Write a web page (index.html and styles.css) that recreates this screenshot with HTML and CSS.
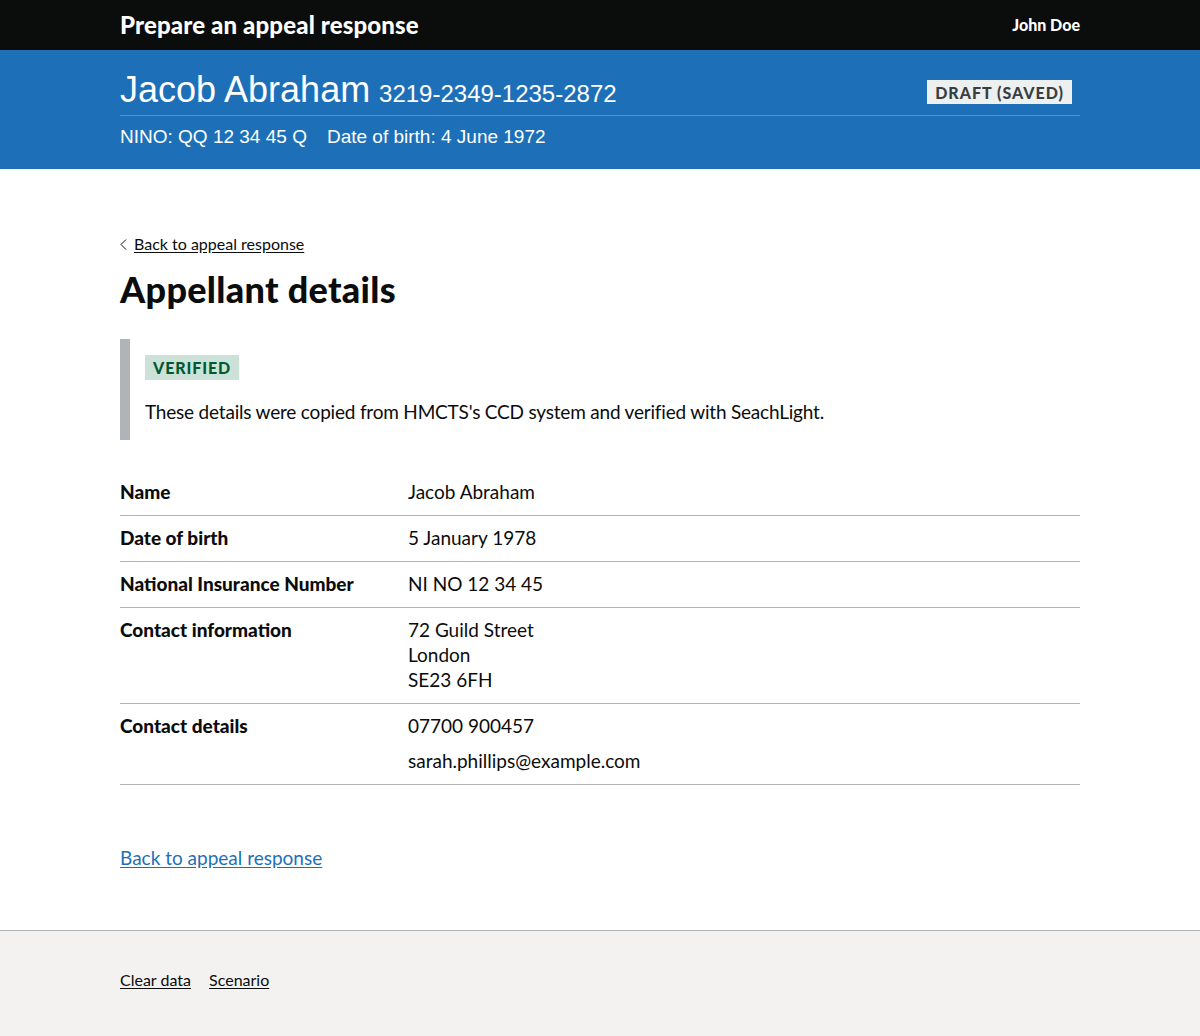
FILE: index.html
```html
<!DOCTYPE html>
<html lang="en">
<head>
<meta charset="utf-8">
<title>Appellant details</title>
<link rel="stylesheet" href="styles.css">
</head>
<body>
<header class="topbar">
  <div class="width">
    <div class="topbar-inner">
      <span class="service">Prepare an appeal response</span>
      <span class="user">John Doe</span>
    </div>
  </div>
</header>
<section class="banner">
  <div class="width">
    <div class="banner-top">
      <h1 class="person"><span class="person-name">Jacob Abraham</span> <span class="person-ref">3219-2349-1235-2872</span></h1>
      <span class="status">Draft (saved)</span>
    </div>
    <p class="banner-meta"><span>NINO: QQ 12 34 45 Q</span><span>Date of birth: 4 June 1972</span></p>
  </div>
</section>
<main class="width main">
  <a class="back-link" href="#"><svg class="chev" width="7" height="11" viewBox="0 0 7 11"><path d="M6 0.5 L1 5.5 L6 10.5" fill="none" stroke="#0b0c0c" stroke-width="1"/></svg>Back to appeal response</a>
  <h2 class="heading">Appellant details</h2>
  <div class="inset">
    <span class="tag-green">Verified</span>
    <p class="inset-text">These details were copied from HMCTS's CCD system and verified with SeachLight.</p>
  </div>
  <dl class="summary">
    <div class="row"><dt>Name</dt><dd>Jacob Abraham</dd></div>
    <div class="row"><dt>Date of birth</dt><dd>5 January 1978</dd></div>
    <div class="row"><dt>National Insurance Number</dt><dd>NI NO 12 34 45</dd></div>
    <div class="row"><dt>Contact information</dt><dd>72 Guild Street<br>London<br>SE23 6FH</dd></div>
    <div class="row"><dt>Contact details</dt><dd><p class="dd-p">07700 900457</p><p class="dd-p">sarah.phillips@example.com</p></dd></div>
  </dl>
  <p class="bottom-link"><a href="#" class="link">Back to appeal response</a></p>
</main>
<footer class="footer">
  <div class="width">
    <a href="#" class="footer-link">Clear data</a>
    <a href="#" class="footer-link">Scenario</a>
  </div>
</footer>
</body>
</html>
```

FILE: styles.css
```css
* { box-sizing: border-box; }
html, body { margin: 0; padding: 0; }
body {
  font-family: Lato, "Liberation Sans", Arial, sans-serif;
  color: #0b0c0c;
  background: #fff;
}
.width { width: 960px; margin: 0 auto; }

.topbar { background: #0b0c0c; color: #fff; height: 50px; }
.topbar-inner { display: flex; justify-content: space-between; align-items: center; height: 48px; }
.service { font-weight: 900; font-size: 24px; letter-spacing: 0.15px; }
.user { font-weight: 900; font-size: 16px; }

.banner { background: #1d70b8; color: #fff; height: 119px; font-family: "Liberation Sans", Arial, sans-serif; }
.banner-top {
  display: flex; justify-content: space-between; align-items: center;
  border-bottom: 1px solid #5694ca; height: 66px; padding-top: 14px;
}
.person { margin: 0; font-weight: 400; }
.person-name { font-size: 36px; }
.person-ref { font-size: 24px; }
.status {
  font-family: Lato, sans-serif; font-weight: 900; font-size: 16px; text-transform: uppercase;
  letter-spacing: 1px; background: #eeefef; color: #383f43; padding: 3px 8px 2px 8px;
  margin-right: 8px; margin-top: 4px; line-height: 19px;
}
.banner-meta { margin: 0; padding-top: 10px; font-size: 19px; display: flex; gap: 20px; }

.main { padding-top: 65px; padding-bottom: 60px; }
.back-link {
  display: inline-flex; align-items: center; gap: 7px;
  font-size: 16px; line-height: 20px; color: #0b0c0c; text-decoration: underline;
  text-underline-offset: 2px;
}
.chev { margin-top: 1px; }
.heading { font-size: 36px; line-height: 40px; font-weight: 900; margin: 15px 0 30px; letter-spacing: 0.3px; }

.inset { border-left: 10px solid #b1b4b6; padding: 16px 15px 16px 15px; margin-bottom: 30px; }
.tag-green {
  display: inline-block; background: #cce2d8; color: #005a30; font-weight: 900;
  font-size: 16px; line-height: 19px; text-transform: uppercase; letter-spacing: 0.9px;
  padding: 3px 8px;
}
.inset-text { margin: 19px 0 0; font-size: 19px; line-height: 25px; letter-spacing: -0.2px; }

.summary { margin: 0; font-size: 19px; line-height: 25px; }
.row { display: grid; grid-template-columns: 288px 1fr; border-bottom: 1px solid #b1b4b6; }
.row dt { font-weight: 900; padding: 9px 0 11px; }
.row dd { margin: 0; padding: 9px 0 11px; }
.dd-p { margin: 0 0 10px; }
.dd-p:last-child { margin-bottom: 0; }

.bottom-link { margin: 60px 0 0; font-size: 19px; line-height: 25px; }
.link { color: #1d70b8; text-decoration: underline; text-underline-offset: 2px; }

.footer { background: #f3f2f1; border-top: 1px solid #b1b4b6; height: 106px; padding-top: 39px; }
.footer-link { font-size: 16px; line-height: 20px; color: #0b0c0c; margin-right: 14px; text-underline-offset: 2px; }
```
